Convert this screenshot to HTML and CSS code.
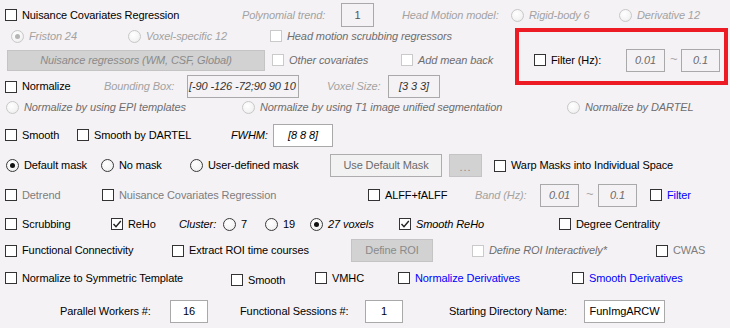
FILE: index.html
```html
<!DOCTYPE html>
<html lang="en">
<head>
<meta charset="utf-8">
<title>Preprocessing and analysis options</title>
<link rel="stylesheet" href="styles.css">
</head>
<body>
<div class="panel">
  <div class="row r1">
    <label class="opt"><span class="box"></span>Nuisance Covariates Regression</label>
    <span class="dim">Polynomial trend:</span>
    <span class="field trend">1</span>
    <span class="dim">Head Motion model:</span>
    <label class="opt dim"><span class="radio off"></span>Rigid-body 6</label>
    <label class="opt dim"><span class="radio off"></span>Derivative 12</label>
  </div>

  <div class="row r2">
    <label class="opt dim"><span class="radio off on"></span>Friston 24</label>
    <label class="opt dim"><span class="radio off"></span>Voxel-specific 12</label>
    <label class="opt soft"><span class="box off"></span>Head motion scrubbing regressors</label>
  </div>

  <div class="row r3">
    <span class="btn grey wide it">Nuisance regressors (WM, CSF, Global)</span>
    <label class="opt soft"><span class="box off"></span>Other covariates</label>
    <label class="opt soft"><span class="box off"></span>Add mean back</label>
    <label class="opt"><span class="box"></span>Filter (Hz):</label>
    <span class="field band it">0.01</span>
    <span class="tilde">~</span>
    <span class="field band it">0.1</span>
  </div>

  <div class="row r4">
    <label class="opt"><span class="box"></span>Normalize</label>
    <span class="dim">Bounding Box:</span>
    <span class="field bbox it">[-90 -126 -72;90 90 10</span>
    <span class="dim">Voxel Size:</span>
    <span class="field voxel it">[3 3 3]</span>
  </div>

  <div class="row r5">
    <label class="opt soft"><span class="radio off"></span>Normalize by using EPI templates</label>
    <label class="opt soft"><span class="radio off"></span>Normalize by using T1 image unified segmentation</label>
    <label class="opt soft"><span class="radio off"></span>Normalize by DARTEL</label>
  </div>

  <div class="row r6">
    <label class="opt"><span class="box"></span>Smooth</label>
    <label class="opt"><span class="box"></span>Smooth by DARTEL</label>
    <span class="it">FWHM:</span>
    <span class="field live fwhm it">[8 8 8]</span>
  </div>

  <div class="row r7">
    <label class="opt"><span class="radio on"></span>Default mask</label>
    <label class="opt"><span class="radio"></span>No mask</label>
    <label class="opt"><span class="radio"></span>User-defined mask</label>
    <span class="btn light mask">Use Default Mask</span>
    <span class="btn grey dots">...</span>
    <label class="opt"><span class="box"></span>Warp Masks into Individual Space</label>
  </div>

  <div class="row r8">
    <label class="opt greyed"><span class="box"></span>Detrend</label>
    <label class="opt greyed"><span class="box"></span>Nuisance Covariates Regression</label>
    <label class="opt"><span class="box"></span>ALFF+fALFF</label>
    <span class="dim">Band (Hz):</span>
    <span class="field band it">0.01</span>
    <span class="tilde">~</span>
    <span class="field band it">0.1</span>
    <label class="opt blue"><span class="box"></span>Filter</label>
  </div>

  <div class="row r9">
    <label class="opt"><span class="box"></span>Scrubbing</label>
    <label class="opt"><span class="box checked"><svg viewBox="0 0 10 10" width="10" height="10"><polyline points="1.5,5 4,7.8 8.8,2" /></svg></span>ReHo</label>
    <span class="it">Cluster:</span>
    <label class="opt"><span class="radio"></span>7</label>
    <label class="opt"><span class="radio"></span>19</label>
    <label class="opt it"><span class="radio on"></span>27 voxels</label>
    <label class="opt it"><span class="box checked"><svg viewBox="0 0 10 10" width="10" height="10"><polyline points="1.5,5 4,7.8 8.8,2" /></svg></span>Smooth ReHo</label>
    <label class="opt"><span class="box"></span>Degree Centrality</label>
  </div>

  <div class="row r10">
    <label class="opt"><span class="box"></span>Functional Connectivity</label>
    <label class="opt"><span class="box"></span>Extract ROI time courses</label>
    <span class="btn grey roi">Define ROI</span>
    <label class="opt soft"><span class="box off"></span>Define ROI Interactively*</label>
    <label class="opt greyed"><span class="box"></span>CWAS</label>
  </div>

  <div class="row r11">
    <label class="opt"><span class="box"></span>Normalize to Symmetric Template</label>
    <label class="opt low"><span class="box"></span>Smooth</label>
    <label class="opt"><span class="box"></span>VMHC</label>
    <label class="opt blue"><span class="box"></span>Normalize Derivatives</label>
    <label class="opt blue"><span class="box"></span>Smooth Derivatives</label>
  </div>

  <div class="row r12">
    <span>Parallel Workers #:</span>
    <span class="field live count">16</span>
    <span>Functional Sessions #:</span>
    <span class="field live count">1</span>
    <span>Starting Directory Name:</span>
    <span class="field live dir">FunImgARCW</span>
  </div>
</div>

<!-- highlight drawn over the filter controls -->
<div class="mark"></div>
</body>
</html>
```

FILE: styles.css
```css
* { box-sizing: border-box; }
html, body { margin: 0; }
body {
  position: relative;
  width: 730px;
  height: 328px;
  overflow: hidden;
  background: #f5f2f5;
  color: #000;
  font: 11px/13px "Liberation Sans", Arial, sans-serif;
  letter-spacing: -0.1px;
}
.panel {
  padding-top: 3px;
}

/* rows: each one is a grid whose columns start where the controls sit */
.row {
  display: grid;
  align-items: center;
  justify-items: start;
  white-space: nowrap;
}
.r1  { height: 24px; padding-left: 5px;  grid-template-columns: 237px 99px 61px 109px 108px auto; }
.r2  { height: 18px; padding-left: 11px; grid-template-columns: 117px 142px auto; }
.r3  { height: 30px; padding-left: 7px;  grid-template-columns: 265px 129px 133px 92px 44px 11px auto; }
.r4  { height: 19px; padding-left: 5px;  grid-template-columns: 99px 83px 140px 61px auto; }
.r5  { height: 26px; padding-left: 6px;  grid-template-columns: 236px 325px auto; }
.r6  { height: 30px; padding-left: 5px;  grid-template-columns: 72px 154px 42px auto; }
.r7  { height: 31px; padding-left: 6px;  grid-template-columns: 95px 89px 140px 119px 45px auto; }
.r8  { height: 28px; padding-left: 5px;  grid-template-columns: 97px 266px 107px 65px 46px 12px 52px auto; }
.r9  { height: 30px; padding-left: 5px;  grid-template-columns: 106px 68px 44px 42px 45px 89px 160px auto; }
.r10 { height: 23px; padding-left: 5px;  grid-template-columns: 167px 179px 121px 184px auto; }
.r11 { height: 32px; padding-left: 5px;  grid-template-columns: 226px 84px 83px 174px auto; }
.r12 { height: 34px; padding-left: 60px; grid-template-columns: 110px 70px 125px 84px 135px auto; }

/* text styles */
.it { font-style: italic; }
.dim { font-style: italic; color: #a2a2a2; }
.soft { font-style: italic; color: #6e6e6e; }
.greyed { color: #7d7d7d; }
.blue { color: #0000ff; }
.tilde { color: #a8a8a8; font-size: 13px; margin-top: -4px; }

/* checkbox and radio */
.opt {
  display: inline-flex;
  align-items: center;
  gap: 5px;
}
.opt.low { margin-top: 4px; }
.box {
  display: inline-flex;
  align-items: center;
  justify-content: center;
  width: 12px;
  height: 12px;
  border: 1px solid #333;
  background: #fff;
  flex: none;
}
.box.off { border-color: #cacaca; }
.box svg polyline {
  fill: none;
  stroke: #222;
  stroke-width: 1.4;
}
.radio {
  position: relative;
  width: 13px;
  height: 13px;
  border-radius: 50%;
  border: 1px solid #3a3a3a;
  background: radial-gradient(circle at 40% 35%, #fff 0%, #f4f4f4 60%, #e2e2e2 100%);
  flex: none;
}
.radio.off { border-color: #c8c8c8; }
.radio.on::after {
  content: "";
  position: absolute;
  left: 3px;
  top: 3px;
  width: 5px;
  height: 5px;
  border-radius: 50%;
  background: #111;
}
.radio.off.on::after { background: #b5b5b5; }

/* edit fields */
.field {
  display: flex;
  align-items: center;
  justify-content: center;
  height: 23px;
  border: 1px solid #a9a9a9;
  color: #555;
  overflow: hidden;
}
.field.live { background: #fff; color: #000; }
.trend { width: 33px; height: 24px; }
.band { width: 39px; color: #6a6a6a; }
.bbox { width: 112px; justify-content: flex-start; padding-left: 1px; color: #333; }
.voxel { width: 52px; color: #333; }
.fwhm { width: 60px; }
.count { width: 38px; }
.dir { width: 81px; }

/* push buttons */
.btn {
  display: flex;
  align-items: center;
  justify-content: center;
  height: 23px;
  border: 1px solid #c4c4c4;
}
.btn.grey { background: #d2d2d2; color: #8a8a8a; }
.btn.light { background: #f3f2f3; border-color: #adadad; color: #6a6a6a; }
.wide { width: 258px; height: 21px; }
.mask { width: 112px; }
.dots { width: 33px; color: #a0a0a0; padding-top: 4px; letter-spacing: 1px; }
.roi { width: 82px; }

.mark {
  position: absolute;
  left: 515px;
  top: 28px;
  width: 213px;
  height: 57px;
  border: 4px solid #ed1c24;
}
```
